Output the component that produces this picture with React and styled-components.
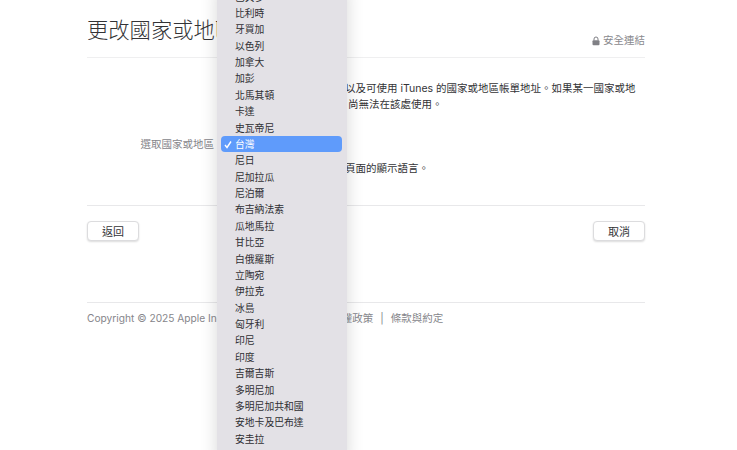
import React from "react";
import styled, { createGlobalStyle } from "styled-components";

const countries = [
  "巴貝多", "比利時", "牙買加", "以色列", "加拿大", "加彭", "北馬其頓", "卡達", "史瓦帝尼",
  "台灣", "尼日", "尼加拉瓜", "尼泊爾", "布吉納法索", "瓜地馬拉", "甘比亞", "白俄羅斯",
  "立陶宛", "伊拉克", "冰島", "匈牙利", "印尼", "印度", "吉爾吉斯", "多明尼加",
  "多明尼加共和國", "安地卡及巴布達", "安圭拉", "安哥拉"
];

const GlobalStyle = createGlobalStyle`
  html, body {
    margin: 0;
    height: 100%;
    overflow: hidden;
    background: #fff;
  }
  body {
    font-family: Inter, "Noto Sans CJK TC", sans-serif;
    color: #333336;
  }
`;

const Page = styled.div`
  position: relative;
  width: 737px;
  height: 450px;
  overflow: hidden;
  box-sizing: border-box;
  padding: 0 92px 0 87px;
`;

const Header = styled.header`
  display: flex;
  align-items: flex-end;
  justify-content: space-between;
  height: 58px;
  box-sizing: border-box;
  padding-bottom: 9px;
  border-bottom: 1px solid #efeff0;
`;

const Title = styled.h1`
  margin: 0 0 4px;
  font-size: 21.3px;
  line-height: 28px;
  font-weight: 300;
  color: #333336;
`;

const Secure = styled.div`
  display: flex;
  align-items: center;
  gap: 3px;
  font-size: 10.5px;
  line-height: 14px;
  color: #8a8a8e;
`;

const Form = styled.section`
  display: grid;
  grid-template-columns: 127px 1fr;
  column-gap: 5px;
  align-content: start;
  height: 148px;
  box-sizing: border-box;
  padding-top: 23px;
  border-bottom: 1px solid #e8e8ea;
`;

const Label = styled.div`
  grid-row: 2;
  text-align: right;
  font-size: 10.5px;
  line-height: 16px;
  white-space: nowrap;
  color: #86868b;
`;

const Copy = styled.p`
  grid-column: 2;
  margin: 0;
  font-size: 10.5px;
  line-height: 16px;
  white-space: nowrap;
  color: #333336;
`;

const Intro = styled(Copy)`
  grid-row: 1;
  height: 56px;
`;

const Note = styled(Copy)`
  grid-row: 3;
  margin-top: 8px;
`;

const Actions = styled.div`
  display: flex;
  justify-content: space-between;
  height: 97px;
  box-sizing: border-box;
  padding-top: 15px;
  border-bottom: 1px solid #e8e8ea;
`;

const Button = styled.button`
  width: 52px;
  height: 20px;
  padding: 0;
  font: inherit;
  font-size: 11px;
  color: #333336;
  background: #fff;
  border: 1px solid #dcdcde;
  border-radius: 4px;
  box-shadow: 0 1px 2px rgba(0, 0, 0, 0.14);
`;

const Footer = styled.footer`
  display: flex;
  gap: 7px;
  padding-top: 8px;
  font-size: 10.5px;
  line-height: 15px;
  color: #86868b;
`;

const Copyright = styled.span`
  margin-right: 14px;
  font-size: 10.2px;
`;

const Menu = styled.ul`
  position: absolute;
  top: -11.7px;
  left: 217px;
  width: 130px;
  margin: 0;
  padding: 0 5px 0 4px;
  box-sizing: border-box;
  list-style: none;
  background: #e3e1e6;
  box-shadow: 0 0 16px rgba(0, 0, 0, 0.16);
`;

const Item = styled.li`
  display: flex;
  align-items: center;
  height: 16.38px;
  padding-left: 14px;
  position: relative;
  font-size: 9.8px;
  color: ${props => (props.$selected ? "#fff" : "#2f2f33")};
  background: ${props => (props.$selected ? "#5f9bfb" : "transparent")};
  border-radius: ${props => (props.$selected ? "4px" : "0")};
`;

const Check = styled.svg`
  position: absolute;
  left: 3px;
  top: 4px;
  width: 8px;
  height: 9px;
`;

const LockIcon = () => (
  <svg width="8" height="10" viewBox="0 0 8 10">
    <path d="M2 4.5V3a2 2 0 0 1 4 0v1.5" fill="none" stroke="#808085" strokeWidth="1" />
    <rect x="0.5" y="4.2" width="7" height="5" rx="1" fill="#808085" />
  </svg>
);

export default function App() {
  return (
    <>
      <GlobalStyle />
      <Page>
        <Header>
          <Title>更改國家或地區</Title>
          <Secure>
            <LockIcon />
            安全連結
          </Secure>
        </Header>
        <Form>
          <Intro>
            請選取您居住國家或地區，以及可使用 iTunes 的國家或地區帳單地址。如果某一國家或地
            <br />
            區沒有列在這裡，表示商店 尚無法在該處使用。
          </Intro>
          <Label>選取國家或地區</Label>
          <Note>變更國家或地區可能會變更頁面的顯示語言。</Note>
        </Form>
        <Actions>
          <Button>返回</Button>
          <Button>取消</Button>
        </Actions>
        <Footer>
          <Copyright>Copyright © 2025 Apple Inc. 保留一切權利。</Copyright>
          <span>隱私權政策</span>
          <span>|</span>
          <span>條款與約定</span>
        </Footer>
        <Menu>
          {countries.map(name => (
            <Item key={name} $selected={name === "台灣"}>
              {name === "台灣" && (
                <Check viewBox="0 0 8 9">
                  <path d="M1 5l2 2.5L7 1.5" fill="none" stroke="#fff" strokeWidth="1.4" />
                </Check>
              )}
              {name}
            </Item>
          ))}
        </Menu>
      </Page>
    </>
  );
}
